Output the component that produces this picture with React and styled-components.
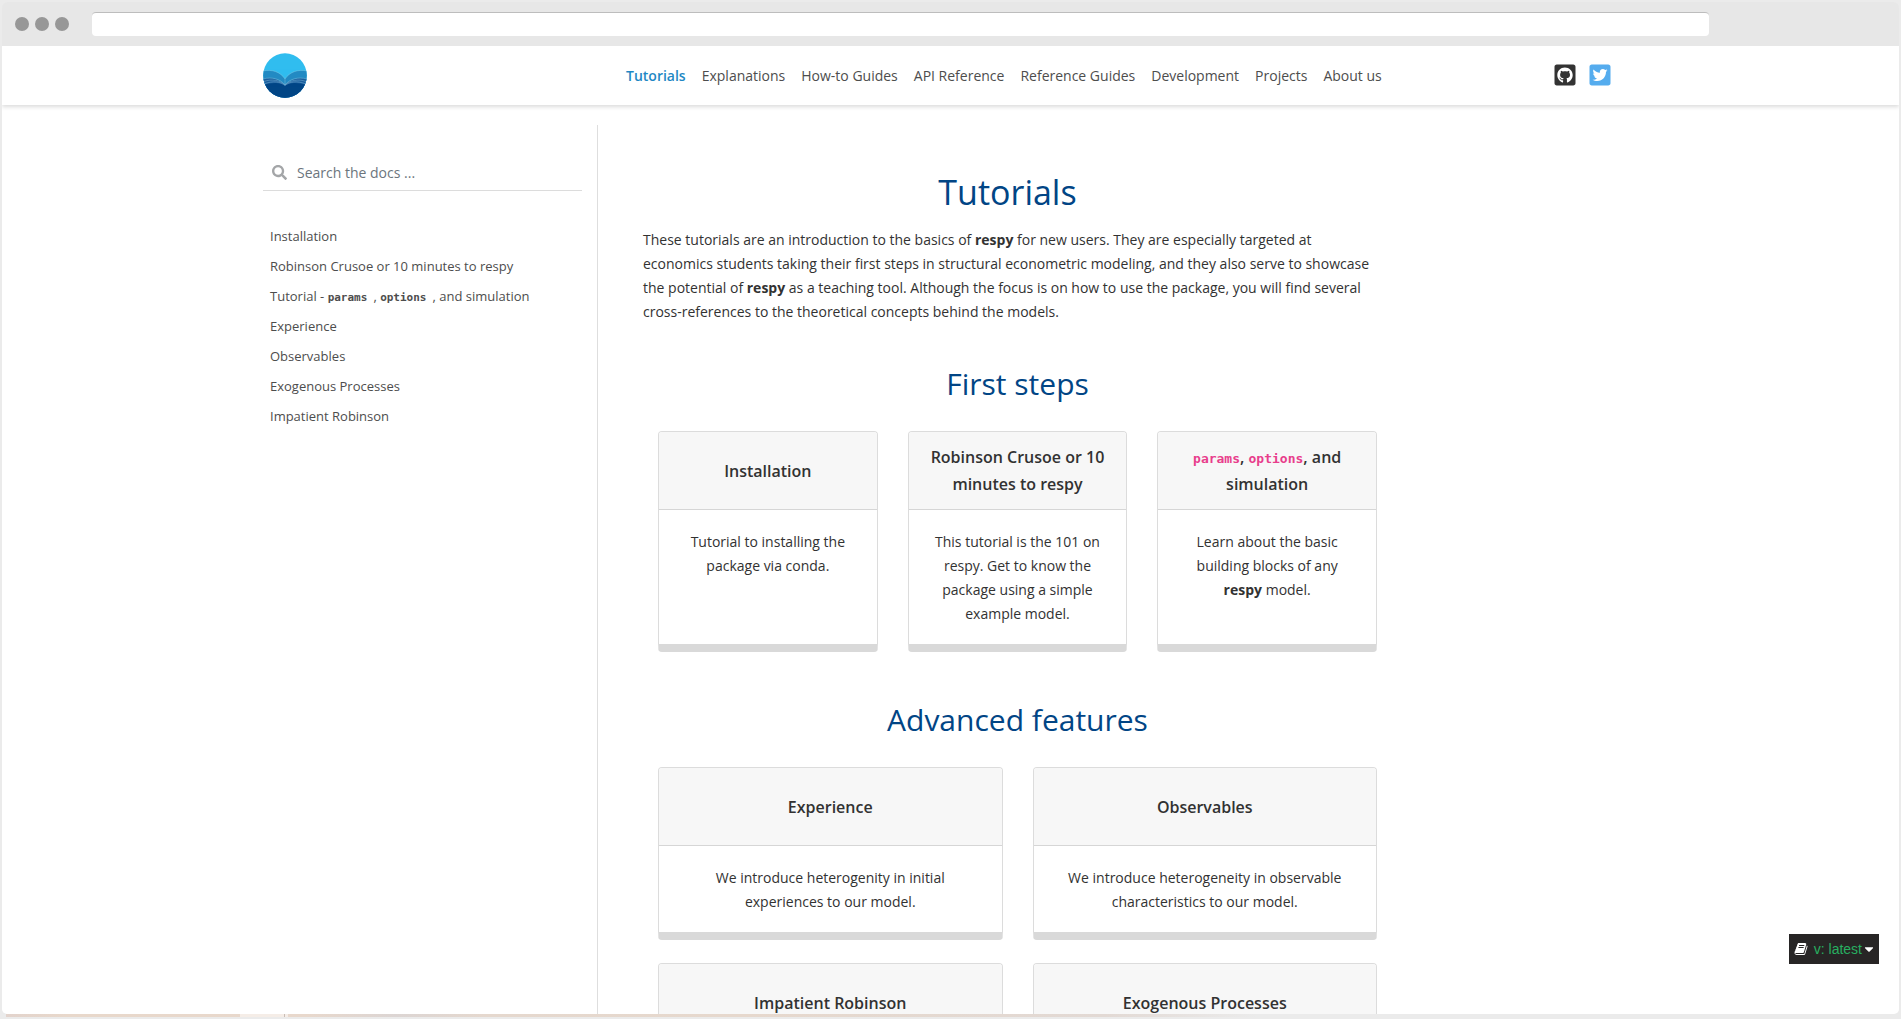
import React from "react";
import styled, { createGlobalStyle } from "styled-components";
import { FaCaretDown, FaGithubSquare, FaSearch, FaTwitterSquare } from "react-icons/fa";

const GlobalStyle = createGlobalStyle`
  *, *::before, *::after { box-sizing: border-box; }
  body {
    margin: 0;
    background: #ebebeb;
    color: #323232;
    font-family: "Open Sans", "Noto Sans", sans-serif;
    font-size: 14px;
    line-height: 24px;
  }
  a { color: inherit; text-decoration: none; }
  h1, h2, h3, p, ul { margin: 0; padding: 0; font-weight: 400; }
  ul { list-style: none; }
  code { line-height: 1; }
`;

const Frame = styled.div`
  display: flex;
  flex-direction: column;
  height: 100vh;
  padding: 2px;
  overflow: hidden;
`;

const BrowserBar = styled.div`
  display: flex;
  align-items: center;
  flex: none;
  gap: 6px;
  height: 44px;
  padding: 0 190px 0 13px;
  background: #e7e7e7;
  border-radius: 6px 6px 0 0;
`;

const Dot = styled.span`
  width: 14px;
  height: 14px;
  border-radius: 50%;
  background: #979797;
`;

const AddressInput = styled.input`
  flex: 1;
  height: 24px;
  margin-left: 17px;
  padding: 0 8px;
  border: 0;
  border-top: 1px solid #bdbdbd;
  border-radius: 4px;
  background: #fff;
  outline: 0;
`;

const Page = styled.div`
  display: flex;
  flex-direction: column;
  flex: 1;
  min-height: 0;
  overflow: hidden;
  background: #fff;
  border-radius: 0 0 5px 5px;
`;

const Header = styled.header`
  flex: none;
  background: #fff;
  box-shadow: 0 2px 4px rgba(0, 0, 0, 0.14);
`;

const HeaderInner = styled.div`
  display: grid;
  grid-template-columns: 363px 1fr auto;
  align-items: center;
  max-width: 1375px;
  height: 59px;
  margin: 0 auto;
  padding-right: 26px;
`;

const LogoLink = styled.a`
  display: flex;
`;

const Nav = styled.nav`
  display: flex;
  gap: 16px;
  white-space: nowrap;
`;

const NavLink = styled.a`
  color: ${(p) => (p.$active ? "#1f88c4" : "#4d4d4d")};
  font-weight: ${(p) => (p.$active ? 600 : 400)};
`;

const Socials = styled.div`
  display: flex;
  gap: 11px;
  padding-bottom: 2px;
`;

const SocialLink = styled.a`
  display: flex;
  color: ${(p) => p.$color};
  font-size: 24px;
`;

const Body = styled.div`
  display: flex;
  width: 100%;
  max-width: 1375px;
  margin: 20px auto 0;
`;

const Sidebar = styled.aside`
  flex: none;
  width: 335px;
  min-height: 100vh;
  padding: 30px 15px 0 0;
  border-right: 1px solid #dedede;
`;

const SearchForm = styled.form`
  display: flex;
  align-items: center;
  gap: 10px;
  height: 36px;
  padding-left: 9px;
  border-bottom: 1px solid #dcdcdc;
  color: #a4a6a8;
  font-size: 15px;
`;

const SearchInput = styled.input`
  flex: 1;
  min-width: 0;
  padding: 0;
  border: 0;
  outline: 0;
  background: transparent;
  color: #495057;
  font: inherit;
  font-size: 14px;
  &::placeholder { color: #6c757d; opacity: 1; }
`;

const TocList = styled.ul`
  margin-top: 30px;
  padding-left: 7px;
  color: #4d4d4d;
  font-size: 13px;
`;

const TocItem = styled.li`
  line-height: 30px;
`;

const TocCode = styled.code`
  margin-right: 6px;
  font-family: "DejaVu Sans Mono", monospace;
  font-size: 11px;
  font-weight: 700;
`;

const Main = styled.main`
  width: 794px;
  padding: 43px 0 0 45px;
`;

const Title = styled.h1`
  padding-right: 20px;
  color: #014585;
  font-size: 34px;
  line-height: 48px;
  text-align: center;
`;

const Intro = styled.p`
  margin-top: 12px;
  padding-right: 12px;
`;

const SectionTitle = styled.h2`
  margin-top: ${(p) => p.$top}px;
  color: #014585;
  font-size: 30px;
  line-height: 40px;
  text-align: center;
`;

const CardGrid = styled.div`
  display: grid;
  grid-template-columns: repeat(${(p) => p.$columns}, 1fr);
  gap: 23px 30px;
  margin-top: 27px;
  padding: 0 15px;
`;

const Card = styled.a`
  display: flex;
  flex-direction: column;
  overflow: hidden;
  border: 1px solid #dcdcdc;
  border-bottom: 8px solid #d9d9d9;
  border-radius: 4px;
  text-align: center;
`;

const CardHeader = styled.h3`
  display: flex;
  align-items: center;
  justify-content: center;
  height: 78px;
  padding: 1px 16px 0;
  border-bottom: 1px solid #d6d6d6;
  background: #f7f7f7;
  font-size: 16px;
  font-weight: 600;
  line-height: 27px;
`;

const CardCode = styled.code`
  color: #e83e8c;
  font-family: "DejaVu Sans Mono", monospace;
  font-size: 13px;
`;

const CardBody = styled.p`
  padding: 20px 24px 18px;
`;

const VersionButton = styled.button`
  position: fixed;
  right: 22px;
  bottom: 55px;
  display: flex;
  align-items: center;
  gap: 6px;
  height: 30px;
  padding: 0 3px 0 5px;
  border: 0;
  background: #272525;
  color: #fff;
  font-family: "Liberation Sans", Arial, sans-serif;
  font-size: 14px;
`;

const VersionLabel = styled.span`
  display: flex;
  align-items: center;
  color: #27ae60;
  svg { color: #fff; }
`;

const EdgeStrip = styled.div`
  flex: none;
  height: 3px;
  margin-left: 4px;
  background:
    linear-gradient(#c9bdb6, #c9bdb6) 278px 0 / 1px 3px no-repeat,
    linear-gradient(#f5ede7, #f5ede7) 234px 0 / 48px 3px no-repeat,
    linear-gradient(90deg, #e2d3cc, #e8d8cb 60px, #e8d8cc 300px, #dcd5d3 390px, #e5d8ce 480px, #e6d8cd 740px, #e2d9d4 1100px, #ebebeb 1250px);
`;

const Logo = () => (
  <svg width="44" height="45" viewBox="0 0 45 45" preserveAspectRatio="none" role="img" aria-label="respy">
    <defs>
      <clipPath id="disc"><circle cx="22.5" cy="22.5" r="22.3" /></clipPath>
    </defs>
    <g clipPath="url(#disc)">
      <rect width="45" height="45" fill="#30bdef" />
      <path d="M0 18C9 16 18 19 22.500 26C27 19 36 16 45 18V45H0Z" fill="#238bc3" />
      <path d="M0 26C8 24 17 26 22.500 32C28 26 37 24 45 26V45H0Z" fill="#1b5e9f" />
      <path d="M0 32C8 30 17 28.500 22.500 33C28 28.500 37 30 45 32V45H0Z" fill="#014585" />
      <g fill="none" stroke="#8fc5df" strokeWidth=".6" opacity=".7">
        <path d="M0 18C9 16 18 19 22.500 26C27 19 36 16 45 18" />
        <path d="M22.500 25.500V32" />
        <path d="M0 26C9 23.500 18 26 22.500 32C27 26 36 23.500 45 26" />
        <path d="M1 28.500C9 25.500 18 27.500 22.500 32C27 27.500 36 25.500 44 28.500" />
        <path d="M1 31C10 27.500 18 28.500 22.500 32.500C27 28.500 35 27.500 44 31" />
      </g>
    </g>
  </svg>
);

const BookIcon = () => (
  <svg width="14" height="14" viewBox="0 0 1792 1792" fill="currentColor" aria-hidden="true">
    <path d="M1703 478q40 57 18 129l-275 906q-19 64-76.500 107.500t-122.500 43.500h-923q-77 0-148.500-53.500t-99.500-131.500q-24-67-2-127 0-4 3-27t4-37q1-8-3-21.500t-3-19.500q2-11 8-21t16.500-23.500 16.500-23.500q23-38 45-91.500t30-91.500q3-10 .5-30t-.5-28q3-11 17-28t17-23q21-36 42-92t25-90q1-9-2.500-32t.5-28q4-13 22-30.500t22-22.500q19-26 42.500-84.500t27.500-96.500q1-8-3-25.500t-2-26.500q2-8 9-18t18-23 17-21q8-12 16.500-30.500t15-35 16-36 19.500-32 26.500-23.500 36-11.500 47.500 5.500l-1 3q38-9 51-9h761q74 0 114 56t18 130l-274 906q-36 119-71.500 153.500t-128.500 34.500h-869q-27 0-38 15-11 16-1 43 24 70 144 70h923q29 0 56-15.500t35-41.500l300-987q7-22 5-57 38 15 59 43zm-1064 2q-4 13 2 22.500t20 9.500h608q13 0 25.500-9.500t16.500-22.500l21-64q4-13-2-22.500t-20-9.500h-608q-13 0-25.500 9.500t-16.500 22.500zm-83 256q-4 13 2 22.500t20 9.500h608q13 0 25.500-9.500t16.500-22.500l21-64q4-13-2-22.500t-20-9.500h-608q-13 0-25.500 9.500t-16.500 22.500z" />
  </svg>
);

const navItems = ["Tutorials", "Explanations", "How-to Guides", "API Reference", "Reference Guides", "Development", "Projects", "About us"];

const tocItems = [
  "Installation",
  "Robinson Crusoe or 10 minutes to respy",
  <>Tutorial - <TocCode>params</TocCode>, <TocCode>options</TocCode>, and simulation</>,
  "Experience",
  "Observables",
  "Exogenous Processes",
  "Impatient Robinson",
];

const firstSteps = [
  { title: "Installation", text: "Tutorial to installing the package via conda." },
  { title: "Robinson Crusoe or 10 minutes to respy", text: "This tutorial is the 101 on respy. Get to know the package using a simple example model." },
  {
    title: <><CardCode>params</CardCode>, <CardCode>options</CardCode>, and simulation</>,
    text: <>Learn about the basic building blocks of any <strong>respy</strong> model.</>,
  },
];

const advanced = [
  { title: "Experience", text: "We introduce heterogenity in initial experiences to our model." },
  { title: "Observables", text: "We introduce heterogeneity in observable characteristics to our model." },
  { title: "Impatient Robinson", text: "" },
  { title: "Exogenous Processes", text: "" },
];

const Cards = ({ items, columns }) => (
  <CardGrid $columns={columns}>
    {items.map((item, i) => (
      <Card href="#" key={i}>
        <CardHeader><span>{item.title}</span></CardHeader>
        <CardBody>{item.text}</CardBody>
      </Card>
    ))}
  </CardGrid>
);

export default function App() {
  return (
    <Frame>
      <GlobalStyle />
      <BrowserBar>
        <Dot /><Dot /><Dot />
        <AddressInput type="text" aria-label="Address" />
      </BrowserBar>
      <Page>
        <Header>
          <HeaderInner>
            <LogoLink href="#"><Logo /></LogoLink>
            <Nav>
              {navItems.map((item, i) => (
                <NavLink href="#" key={item} $active={i === 0}>{item}</NavLink>
              ))}
            </Nav>
            <Socials>
              <SocialLink href="#" aria-label="GitHub" $color="#333333"><FaGithubSquare /></SocialLink>
              <SocialLink href="#" aria-label="Twitter" $color="#55acee"><FaTwitterSquare /></SocialLink>
            </Socials>
          </HeaderInner>
        </Header>
        <Body>
          <Sidebar>
            <SearchForm role="search">
              <FaSearch />
              <SearchInput type="search" placeholder="Search the docs ..." aria-label="Search the docs" />
            </SearchForm>
            <TocList>
              {tocItems.map((item, i) => (
                <TocItem key={i}><a href="#">{item}</a></TocItem>
              ))}
            </TocList>
          </Sidebar>
          <Main>
            <Title>Tutorials</Title>
            <Intro>
              These tutorials are an introduction to the basics of <strong>respy</strong> for new users. They are
              especially targeted at economics students taking their first steps in structural econometric modeling,
              and they also serve to showcase the potential of <strong>respy</strong> as a teaching tool. Although the
              focus is on how to use the package, you will find several cross-references to the theoretical concepts
              behind the models.
            </Intro>
            <SectionTitle $top={40}>First steps</SectionTitle>
            <Cards items={firstSteps} columns={3} />
            <SectionTitle $top={48}>Advanced features</SectionTitle>
            <Cards items={advanced} columns={2} />
          </Main>
        </Body>
      </Page>
      <EdgeStrip />
      <VersionButton type="button">
        <BookIcon />
        <VersionLabel>v: latest <FaCaretDown /></VersionLabel>
      </VersionButton>
    </Frame>
  );
}
